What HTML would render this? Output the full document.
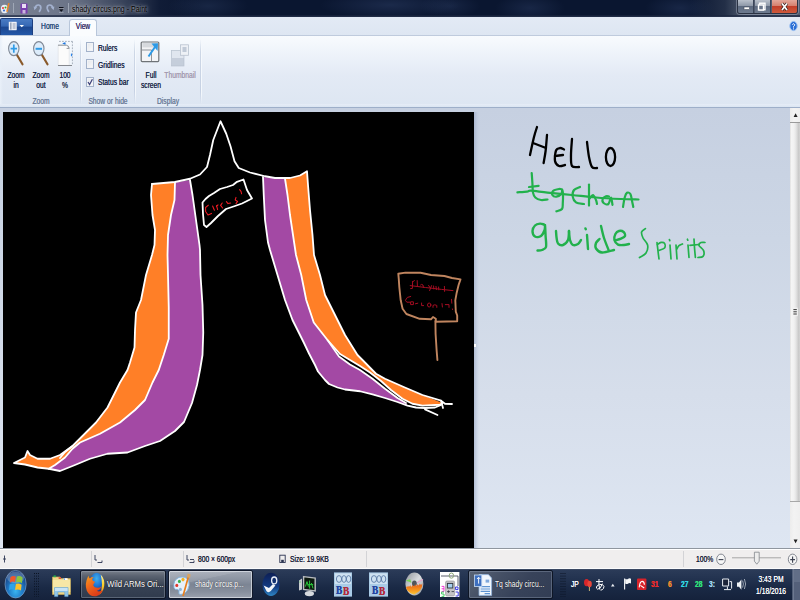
<!DOCTYPE html>
<html><head><meta charset="utf-8">
<style>
*{margin:0;padding:0;box-sizing:border-box}
html,body{width:800px;height:600px;overflow:hidden;background:#c9d3e2;font-family:"Liberation Sans",sans-serif;}
#root{position:relative;width:800px;height:600px;overflow:hidden;background:#c9d3e2}
.abs{position:absolute}
.tx{position:absolute;transform-origin:0 0;transform:scale(.56,.78125);font-size:12px;line-height:15px;white-space:nowrap;color:#1e2a4a;text-shadow:0 0 .7px currentColor}
.cw{position:absolute;width:0;height:0}
.cw>span{position:absolute;left:-100px;width:200px;text-align:center;transform-origin:50% 0;transform:scale(.56,.78125);font-size:12px;line-height:15px;white-space:nowrap;color:#1e2a4a;display:block;text-shadow:0 0 .7px currentColor}
.gl>span{color:#6f7f9a}
.sep{position:absolute;width:1px;background:linear-gradient(180deg,rgba(200,211,228,0) 0%,#cdd7e6 20%,#c6d1e3 80%,rgba(200,211,228,0) 100%)}
.sep:after{content:'';position:absolute;left:1px;top:0;width:1px;height:100%;background:linear-gradient(180deg,rgba(248,251,254,0) 0%,#f6f9fd 15%,#f3f7fc 85%,rgba(248,251,254,0) 100%)}
.cb{position:absolute;width:8.4px;height:10px;background:linear-gradient(135deg,#e4e7ec,#fbfbfc);border:1px solid #a3b2ca;box-shadow:inset 0 0 0 1px #f1f3f6}
</style></head><body><div id="root">
<!-- title bar -->
<div class="abs" id="title" style="left:0;top:0;width:800px;height:17px;background:#0a1630"></div>
<div class="abs" style="left:0;top:0;width:800px;height:17px;background:
 radial-gradient(ellipse 40px 14px at 208px 6px,rgba(60,80,120,.28),rgba(60,80,120,0)),
 radial-gradient(ellipse 70px 14px at 390px 5px,rgba(60,80,125,.34),rgba(60,80,120,0)),
 radial-gradient(ellipse 30px 12px at 450px 6px,rgba(60,80,125,.25),rgba(60,80,120,0)),
 radial-gradient(ellipse 35px 14px at 530px 8px,rgba(60,80,125,.28),rgba(60,80,120,0)),
 radial-gradient(ellipse 35px 14px at 680px 8px,rgba(60,80,125,.28),rgba(60,80,120,0)),
 linear-gradient(90deg,rgba(130,138,155,.95) 0px,rgba(118,126,145,.9) 70px,rgba(80,90,112,.7) 120px,rgba(30,42,70,.3) 160px,rgba(10,22,48,0) 200px,rgba(10,22,48,0) 690px,rgba(60,72,95,.5) 725px,rgba(100,110,128,.8) 745px,rgba(100,110,128,.8) 800px)"></div>
<div class="abs" style="left:0;top:15px;width:800px;height:2px;background:linear-gradient(180deg,rgba(20,30,55,.6),rgba(40,52,78,.9))"></div>
<!-- title icons -->
<svg class="abs" style="left:0;top:0" width="160" height="17" viewBox="0 0 160 17">
 <ellipse cx="4.5" cy="9" rx="3.6" ry="4.2" fill="#e9eef6"/><circle cx="3" cy="8" r="1" fill="#e33"/><circle cx="5.5" cy="7.5" r="1" fill="#3a3"/><circle cx="4" cy="10.5" r="1" fill="#36c"/><rect x="7" y="3" width="1.6" height="9" fill="#e8862a" transform="rotate(12 8 8)"/>
 <rect x="13" y="3" width="1" height="10" fill="#a9b0bf" opacity=".8"/>
 <rect x="20.5" y="3.5" width="7" height="10" rx=".6" fill="#7a3fae"/><rect x="22" y="4" width="4" height="4" fill="#e9def4"/><rect x="22.5" y="10" width="3" height="3.5" fill="#c9b6dd"/>
 <path d="M35.2,8.4 q.4,-3.6 3.4,-3.4 q2.6,.4 2.2,3.4 q-.4,2 -1.8,3.4" stroke="#a3b1cf" stroke-width="1.7" fill="none"/><path d="M33.6,6.6 l3.4,.6 l-2.6,3 Z" fill="#a3b1cf"/>
 <path d="M52.8,8.4 q-.4,-3.6 -3.4,-3.4 q-2.6,.4 -2.2,3.4 q.4,2 1.8,3.4" stroke="#a3b1cf" stroke-width="1.7" fill="none"/><path d="M54.4,6.6 l-3.4,.6 l2.6,3 Z" fill="#a3b1cf"/>
 <rect x="59" y="7" width="4.5" height="1.2" fill="#10131c"/><path d="M59,9.3 L63.5,9.3 61.25,12 Z" fill="#10131c"/><path d="M58.6,8.6 h5.4 M59,12.4 h4.6" stroke="#e8ebf0" stroke-width=".5" opacity=".7"/>
 <rect x="68" y="3" width="1" height="10" fill="#a9b0bf" opacity=".8"/>
</svg>
<div class="tx" style="left:72px;top:2.5px;color:#000;text-shadow:0 0 4px rgba(255,255,255,.75),0 0 9px rgba(255,255,255,.55);font-size:12px;transform:scale(.586,.78125)">shady circus.png - Paint</div>
<!-- window controls -->
<div class="abs" style="left:737px;top:0;width:61px;height:14px;border:1px solid #2b3344;border-top:0;border-radius:0 0 3px 3px;overflow:hidden;box-shadow:0 0 0 1px rgba(200,210,225,.35)">
 <div class="abs" style="left:0;top:0;width:16px;height:13px;background:linear-gradient(180deg,#b9c0cb 0%,#8e98a8 45%,#5d6a80 50%,#6e7b90 100%);border-right:1px solid #3a4458"></div>
 <div class="abs" style="left:17px;top:0;width:16px;height:13px;background:linear-gradient(180deg,#b9c0cb 0%,#8e98a8 45%,#5d6a80 50%,#6e7b90 100%);border-right:1px solid #3a4458"></div>
 <div class="abs" style="left:34px;top:0;width:27px;height:13px;background:linear-gradient(180deg,#e3a79a 0%,#d6806e 45%,#c23f2a 50%,#cf5a3c 100%)"></div>
</div>
<svg class="abs" style="left:737px;top:0" width="63" height="15" viewBox="0 0 63 15">
 <rect x="7" y="7" width="5.5" height="2.6" fill="#fff" stroke="#444c5c" stroke-width=".6"/>
 <rect x="22.5" y="3.2" width="5.5" height="6.5" fill="none" stroke="#fff" stroke-width="1.4"/><rect x="21.5" y="5" width="5" height="5" fill="#6b778c" stroke="#fff" stroke-width="1.4"/>
 <path d="M45,3.5 L50,10 M50,3.5 L45,10" stroke="#3c2320" stroke-width="3" /><path d="M45,3.5 L50,10 M50,3.5 L45,10" stroke="#fff" stroke-width="1.7"/>
</svg>
<!-- tab row -->
<div class="abs" id="tabs" style="left:0;top:17px;width:800px;height:19px;background:linear-gradient(180deg,#e3eaf5,#dde6f2)"></div>
<div class="abs" style="left:0;top:35px;width:800px;height:1px;background:#bfcbdd"></div>
<div class="abs" style="left:0;top:18px;width:33px;height:17px;border-radius:2px 2px 0 0;background:linear-gradient(180deg,#4a7cc4 0%,#3567b3 45%,#1c4790 50%,#2458a8 100%);border:1px solid #1d3f80;border-bottom:0"></div>
<svg class="abs" style="left:0;top:17px" width="34" height="19" viewBox="0 0 34 19">
 <rect x="9" y="5" width="7.5" height="8" fill="#f4f6fa" stroke="#dfe6f2" stroke-width=".5"/><rect x="10" y="5.5" width="1.6" height="7" fill="#9aa7bd"/><path d="M12.6,7 h3 M12.6,9 h3 M12.6,11 h3" stroke="#6d7f9e" stroke-width=".8"/>
 <path d="M19.5,8 L24,8 21.75,10.2 Z" fill="#fff"/>
</svg>
<div class="abs" style="left:69px;top:19px;width:28px;height:18px;background:#fafcfe;border:1px solid #b8c6da;border-bottom:0;border-radius:3px 3px 0 0"></div>
<div class="cw" style="left:49.5px;top:20.3px"><span style="color:#2a4a78">Home</span></div>
<div class="cw" style="left:83px;top:20.3px"><span style="color:#3a2f68">View</span></div>
<!-- help -->
<svg class="abs" style="left:786px;top:19px" width="14" height="14" viewBox="0 0 14 14"><ellipse cx="7.5" cy="7" rx="3.7" ry="4.6" fill="#2b6fd6" stroke="#9cc0f2" stroke-width="1"/><path d="M6.3,5.6 q1.2,-1.8 2.4,0 q0,1.2 -1.2,1.9 l0,1" stroke="#fff" stroke-width="1" fill="none"/><rect x="7" y="9.4" width="1" height="1" fill="#fff"/></svg>
<!-- ribbon -->
<div class="abs" id="ribbon" style="left:0;top:36px;width:800px;height:71px;background:linear-gradient(180deg,#f8fbfe 0%,#eef3fa 25%,#e3eaf5 55%,#dde6f2 100%)"></div>
<div class="abs" style="left:0;top:104px;width:800px;height:3px;background:linear-gradient(180deg,#e6edf7,#dbe5f2)"></div>
<div class="abs" style="left:0;top:107px;width:800px;height:1px;background:#9eafc9"></div>
<div class="abs" style="left:0;top:36px;width:3px;height:68px;background:linear-gradient(90deg,#e9f0f9,rgba(233,240,249,0))"></div>
<div class="sep" style="left:80px;top:39px;height:65px"></div>
<div class="sep" style="left:134px;top:39px;height:65px"></div>
<div class="sep" style="left:200px;top:39px;height:65px"></div>
<!-- ribbon icons -->
<svg class="abs" style="left:0;top:36px" width="210" height="36" viewBox="0 36 210 36">
 <g>
  <path d="M17,55 L22.5,64.3" stroke="#8a5a2b" stroke-width="2.2" stroke-linecap="round"/>
  <ellipse cx="13.8" cy="48.6" rx="5.2" ry="7" fill="#dcecfb" stroke="#7f8794" stroke-width="1.1"/>
  <path d="M10.6,48.6 h6.4 M13.8,44.4 v8.4" stroke="#2f9be6" stroke-width="1.7"/>
  <path d="M42,55 L47.5,64.3" stroke="#8a5a2b" stroke-width="2.2" stroke-linecap="round"/>
  <ellipse cx="38.8" cy="48.6" rx="5.2" ry="7" fill="#dcecfb" stroke="#7f8794" stroke-width="1.1"/>
  <path d="M35.6,48.8 h6.4" stroke="#2f9be6" stroke-width="2"/>
 </g>
 <g>
  <rect x="58" y="40.6" width="14.6" height="25" fill="#f4f8fd" opacity=".6"/>
  <path d="M58.2,45.2 L58.2,65.4 L69.2,65.4 L69.2,48.4 L66.4,45.2 Z" fill="#fbfbfb" stroke="#d6d9de" stroke-width=".5"/>
  <path d="M58,65.5 h14" stroke="#85888e" stroke-width="1"/>
  <path d="M58,45.2 h8.4 q2.6,.4 2.800000000000008,3.2 h-2.6" fill="none" stroke="#86898f" stroke-width=".9"/>
  <path d="M59,41.4 h13.4 M72.4,41.4 v24" stroke="#8a93a3" stroke-width=".7" stroke-dasharray="1.8 1.2"/>
  <path d="M62.2,43.4 l2.6,-1.2 v2.4 Z M64.6,42.4 h1 v2 h-1 Z" fill="#1f78e0"/><rect x="70.9" y="53.6" width="1.2" height="2.6" fill="#2b84ea"/>
 </g>
 <g>
  <rect x="141.2" y="42" width="17.6" height="19.6" rx="1" fill="#f3f4f6" stroke="#6f7377" stroke-width="1.2"/>
  <rect x="142.4" y="43" width="15.2" height="4.4" fill="#d6d9dd"/>
  <path d="M142,50 h9.5 v11" fill="none" stroke="#85898f" stroke-width=".9"/>
  <path d="M148.5,56.5 L156,45.5" stroke="#2d9ae6" stroke-width="2"/><path d="M151.5,43.5 L158,43.2 L157.6,51 Z" fill="#2d9ae6"/>
 </g>
 <g opacity=".9">
  <rect x="171.5" y="50.5" width="12.5" height="15.5" fill="#c2cbd8" stroke="#b0bac9" stroke-width=".6"/>
  <rect x="172" y="51" width="11.5" height="7" fill="#dfe5ee"/>
  <rect x="180.5" y="44.8" width="8" height="10.5" fill="#eef1f6" stroke="#b4bdcb" stroke-width=".8"/>
  <rect x="182.5" y="47" width="4" height="5" fill="#bcc6d4"/>
 </g>
</svg>
<!-- ribbon labels -->
<div class="cw" style="left:15.5px;top:68.6px"><span>Zoom</span></div>
<div class="cw" style="left:15.5px;top:79px"><span>in</span></div>
<div class="cw" style="left:40.5px;top:68.6px"><span>Zoom</span></div>
<div class="cw" style="left:40.5px;top:79px"><span>out</span></div>
<div class="cw" style="left:65px;top:68.6px"><span>100</span></div>
<div class="cw" style="left:65px;top:79px"><span>%</span></div>
<div class="cw gl" style="left:40.5px;top:94.8px"><span>Zoom</span></div>
<div class="cb" style="left:85.8px;top:42.4px"></div>
<div class="cb" style="left:85.8px;top:59.4px"></div>
<div class="cb" style="left:85.8px;top:77px"></div>
<svg class="abs" style="left:86px;top:77px" width="9" height="10" viewBox="0 0 9 10"><path d="M2,5 L3.6,7.6 L6.4,2.2" stroke="#3b3f78" stroke-width="1.2" fill="none"/></svg>
<div class="tx" style="left:97.5px;top:42.2px">Rulers</div>
<div class="tx" style="left:97.5px;top:58.8px">Gridlines</div>
<div class="tx" style="left:97.5px;top:76.2px">Status bar</div>
<div class="cw gl" style="left:108px;top:94.8px"><span>Show or hide</span></div>
<div class="cw" style="left:150.5px;top:68.6px"><span>Full</span></div>
<div class="cw" style="left:150.5px;top:79px"><span>screen</span></div>
<div class="cw" style="left:180px;top:68.6px"><span style="color:#a59bb0">Thumbnail</span></div>
<div class="cw gl" style="left:168px;top:94.8px"><span>Display</span></div>
<!-- workspace -->
<div class="abs" id="work" style="left:0;top:108px;width:790px;height:440px;background:linear-gradient(180deg,#c6d0e1 0%,#ccd6e5 30%,#d6deeb 65%,#dee6f2 100%)"></div>
<div class="abs" style="left:474px;top:112px;width:5px;height:436px;background:linear-gradient(90deg,rgba(150,165,195,.55),rgba(170,184,210,.25) 60%,rgba(170,184,210,0))"></div>
<div class="abs" id="canvas" style="left:3px;top:112px;width:471px;height:436px;background:#000"></div>
<div class="abs" style="left:474px;top:344px;width:2px;height:3px;background:#fff"></div>
<!-- v scrollbar -->
<div class="abs" style="left:790px;top:108px;width:10px;height:440px;background:linear-gradient(90deg,#ececec,#f3f3f3 40%,#efefef)"></div>
<div class="abs" style="left:790px;top:122px;width:10px;height:380px;border-top:1px solid #9a9a9a;border-bottom:1px solid #a8a8a8;background:linear-gradient(90deg,#dcdcdc 0%,#f5f5f5 12%,#f1f1f1 40%,#e4e4e4 60%,#cdcdcd 82%,#c6c6c6 90%,#d9d9d9 100%)"></div>
<svg class="abs" style="left:790px;top:108px" width="10" height="440" viewBox="0 0 10 440">
 <path d="M3.6,9 L5.6,5.2 L7.6,9 Z" fill="#222"/>
 <path d="M3.6,431.5 L7.6,431.5 L5.6,435.3 Z" fill="#222"/>
 <rect x="2.6" y="199.6" width="5.4" height="8.6" rx="1" fill="#f3f3f3" opacity=".8"/>
 <path d="M3.4,201.6 h3.4 M3.4,203.8 h3.4 M3.4,206 h3.4" stroke="#3a3a3a" stroke-width="1"/>
</svg>
<svg class="abs" id="draw" style="left:0;top:0" width="800" height="600" viewBox="0 0 800 600">
<g fill="none" stroke-linejoin="round" stroke-linecap="round">
<path fill="#ff7f27" d="M152,184 L151,195 L152.5,215 L155,230 L154.5,245 L152,255 L146,275 L141,300 L136,312.5 L135,330 L134.5,347.5 L130,362.5 L127.5,370 L120,382.5 L117.5,387.5 L107.5,407.5 L96,422.5 L82.5,436 L72.5,446 L60,455 L50,458.75 L37.5,458.75 L30,455 L27.5,451 L25,457.5 L14,463 L25,464.5 L37.5,467.5 L48.75,468.75 L55,465 L65,457.5 L72.5,448.75 L80,442.5 L100,433.75 L120,422.5 L135,410 L145,400 L152.5,382.5 L158.75,370 L163.75,355 L168.75,338.75 L168.75,307.5 L168,275 L167.5,255 L168,235 L171,215 L174.5,200 L175,182.5 Z"/>
<path fill="#a349a4" d="M175,182.5 L174.5,200 L171,215 L168,235 L167.5,255 L168,275 L168.75,307.5 L168.75,338.75 L163.75,355 L158.75,370 L152.5,382.5 L145,400 L135,410 L120,422.5 L100,433.75 L80,442.5 L72.5,448.75 L65,457.5 L55,465 L48.75,468.75 L60,471 L75,465 L90,458.75 L107.5,453.75 L127.5,452.5 L145,446 L160,441 L175,431 L184,422 L192,403 L197,385 L200,370 L202.5,355 L203.25,332.5 L202.5,305 L200.5,275 L200,250 L199.5,245 L196,220 L192.5,195 L190,180 Z"/>
<path fill="#a349a4" d="M263,177 L263.75,195 L265,220 L268,242.5 L270,250 L277.5,275 L285,300 L292.5,320 L303.75,342.5 L309,353.5 L315,365 L318,371.5 L325,380 L329,384 L337.5,387.5 L345,389.5 L360,391.25 L372.5,394.4 L385,398 L397.5,402 L407.5,405.6 L406,403 L397.5,398 L385,388.75 L372.5,378.75 L360,370 L350,364.5 L339,356.5 L327.5,340 L313.75,322.5 L306.25,300 L301.25,275 L296,255 L293.75,240 L290,215 L287.5,195 L285,178.75 Z"/>
<path fill="#ff7f27" d="M285,178.75 L287.5,195 L290,215 L293.75,240 L296,255 L301.25,275 L306.25,300 L313.75,322.5 L327.5,340 L340,354 L350,360 L360,366 L370,372.5 L381,381 L391,390 L402.5,398.75 L412.5,403.75 L422.5,405.6 L440,404.75 L442.5,403 L422.5,395 L403.75,387 L385,378.75 L376,373.75 L362.5,360 L357.5,355 L345,335 L335,315 L325,295 L320,275 L314,255 L312.5,235 L310,210 L308,185 L307,171.25 L300,175.5 L290,178 Z"/>
<g stroke="#fff" stroke-width="1.8">
<path d="M152,184 L175,182 L190,178.75 L200,174.5 L207,167 L210,155 L213.25,140 L220.5,121.25 L226.25,133.75 L230.5,146.25 L234.5,161.25 L238.75,168 L250,172.5 L265,176.25 L275,178 L290,178 L300,175.5 L307,171.25 L308,185 L310,210 L312.5,235 L314,255 L320,275 L325,295 L335,315 L345,335 L357.5,355 L362.5,360 L376,373.75 L385,378.75 L403.75,387 L422.5,395 L441,400.6 L445,403.75 L452,404"/>
<path d="M152,184 L151,195 L152.5,215 L155,230 L154.5,245 L152,255 L146,275 L141,300 L136,312.5 L135,330 L134.5,347.5 L130,362.5 L127.5,370 L120,382.5 L117.5,387.5 L107.5,407.5 L96,422.5 L82.5,436 L72.5,446 L60,455 L50,458.75 L37.5,458.75 L30,455 L27.5,451 L25,457.5 L14,463 L25,464.5 L37.5,467.5 L48.75,468.75 L60,471 L75,465 L90,458.75 L107.5,453.75 L127.5,452.5 L145,446 L160,441 L175,431 L184,422 L192,403 L197,385 L200,370 L202.5,355 L203.25,332.5 L202.5,305 L200.5,275 L200,250 L199.5,245 L196,220 L192.5,195 L190,180"/>
<path d="M175,182.5 L174.5,200 L171,215 L168,235 L167.5,255 L168,275 L168.75,307.5 L168.75,338.75 L163.75,355 L158.75,370 L152.5,382.5 L145,400 L135,410 L120,422.5 L100,433.75 L80,442.5 L72.5,448.75 L65,457.5 L55,465 L48.75,468.75"/>
<path d="M72.5,446 L65,452 L60,458"/>
<path d="M263,177 L263.75,195 L265,220 L268,242.5 L270,250 L277.5,275 L285,300 L292.5,320 L303.75,342.5 L309,353.5 L315,365 L318,371.5 L325,380 L329,384 L337.5,387.5 L345,389.5 L360,391.25 L372.5,394.4 L385,398 L397.5,402 L407.5,405.6 L416,407.5 L425,408 L435,407.5 L441,405"/>
<path d="M425,409.4 L437.5,415"/>
<path d="M285,178.75 L287.5,195 L290,215 L293.75,240 L296,255 L301.25,275 L306.25,300 L313.75,322.5 L327.5,340 L340,354 L350,360 L360,366 L370,372.5 L381,381 L391,390 L402.5,398.75 L412.5,403.75 L422.5,405.6 L440,404.75 L442.5,403"/>
<path d="M327.5,340 L339,356.5 L350,364.5 L360,370 L372.5,378.75 L385,388.75 L397.5,398 L406,403"/>
<path d="M441,400.6 L443,408"/>
<path d="M202.5,202.5 L205.5,199 L209,196 L214,193 L220,189 L227,187 L233,185 L237,181.8 L243.5,179.5 L247,190 L252,198.5 L242,203.5 L235,206 L226,209 L218,216 L211,223 L206.5,227 L204,225 L203,214 Z"/>
</g>
<!-- circus text -->
<g stroke="#f01c24" stroke-width="1.05">
<path d="M208.4,205.2 L205.6,207.5 205.6,211.5 208,215 211.5,213.4"/>
<path d="M212.6,206 L214.4,210.2"/>
<path d="M216.6,205.6 L217.6,209.6 M216.4,206.6 L218,204.8"/>
<path d="M222.2,203 L220.6,205.4 222.6,208"/>
<path d="M226.4,201.6 L228,203.6 230.6,203"/>
<path d="M236,197.4 L235.2,200 237.6,201.4 236,203.6"/>
<path d="M239.6,189.6 L241,191.4 241.6,193.8"/>
</g>
<!-- brown sign -->
<g stroke="#c0855f" stroke-width="1.9">
<path d="M398.3,273.7 L405.4,272.6 420.6,272.7 431,275 444.4,276 452,278 460.5,279.4 458.6,285 456.7,292.7 455.3,300.3 455.8,311.7 457.2,315.5 457.2,321.2 435.8,321.7 435.8,318.8 433,317 431,319.3 419.7,318.8 406.4,314 402.6,308.8 400.7,300.3 399.3,287 398.8,279.4 Z"/>
<path d="M435.4,321 L435.6,334 436.6,350 437.4,360"/>
</g>
<g stroke="#a40d22" stroke-width="1">
<path d="M410.2,285.6 L425.4,287.5 441.5,289.4 453,290.6"/>
<path d="M412.6,281.4 L412.4,288.4 410.6,288.6 M413,281.6 L414.4,280.6 M417.2,280.6 L417.4,286 M420.6,285 L421.6,284.4 423,285 423.4,287.4 M428.6,285.4 L430.6,288.6 M431.6,285.6 L429.6,290.6 M433.6,286 L433.8,289 M436,286.4 L436.4,289.6 M438.6,287 L438.8,289.8 M444.4,286.4 L444.6,291.4"/>
<path d="M410.7,296.5 L407.4,297.4 405.4,300.3 406.8,302.2 409.7,302.2"/>
<path d="M411,301.8 L413.4,301.8 413.4,304.6 411,304.6 Z"/>
<path d="M415.4,303.8 L417.8,303.2"/>
<path d="M421.6,303 L421.6,305.6 423.6,305.6"/>
<ellipse cx="429.2" cy="305" rx="1.7" ry="2" fill="none"/>
<path d="M433,307.4 L433,305.4 434.8,304.8 436.8,305.4 436.8,307.4"/>
<path d="M442,303.6 L442.4,307"/>
<path d="M445.3,304.6 L449,304.6 449,307.4"/>
<path d="M451.5,299.3 L451.8,303.2 M452.4,308.9 L452.5,309.6"/>
</g>

<g stroke="#000" stroke-width="2.3"><path d="M537,127 C536.50,128.67 535.17,132.33 534,137 C532.83,141.67 530.67,152.00 530,155"/><path d="M533,143 L546,148"/><path d="M547,135 C546.77,137.67 546.17,146.33 545.6,151 C545.03,155.67 543.93,161.00 543.6,163"/><path d="M564,149.5 C563.33,149.25 561.33,147.83 560,148 C558.67,148.17 556.83,148.33 556,150.5 C555.17,152.67 554.50,158.42 555,161 C555.50,163.58 557.33,165.33 559,166 C560.67,166.67 564.00,165.17 565,165"/><path d="M555,156 L563,155"/><path d="M572,139 C571.83,141.67 571.00,150.50 571,155 C571.00,159.50 570.67,164.00 572,166 C573.33,168.00 577.83,166.83 579,167"/><path d="M587,142 C587.33,144.50 588.17,152.83 589,157 C589.83,161.17 590.67,165.17 592,167 C593.33,168.83 596.17,167.83 597,168"/></g>
<ellipse cx="610.5" cy="157" rx="4.6" ry="9" stroke="#000" stroke-width="2.3"/>
<g stroke="#22b14c" stroke-width="2.2"><path d="M517.4,192.3 C519.00,192.18 524.73,191.87 527,191.6 C529.27,191.33 527.58,190.53 531,190.7 C534.42,190.87 540.67,191.88 547.5,192.6 C554.33,193.32 563.92,194.18 572,195 C580.08,195.82 587.90,196.83 596,197.5 C604.10,198.17 613.52,198.67 620.6,199 C627.68,199.33 635.52,199.42 638.5,199.5"/><path d="M531.7,173 C531.82,174.67 532.18,179.73 532.4,183 C532.62,186.27 532.52,190.18 533,192.6 C533.48,195.02 533.97,196.27 535.3,197.5 C536.63,198.73 538.97,199.67 541,200 C543.03,200.33 546.42,199.58 547.5,199.5"/><path d="M529,187 L538.6,185.8"/><path d="M562,189.4 C561.50,189.33 560.50,188.73 559,189 C557.50,189.27 554.10,190.00 553,191 C551.90,192.00 551.83,194.05 552.4,195 C552.97,195.95 554.92,196.87 556.4,196.7 C557.88,196.53 560.32,195.12 561.3,194 C562.28,192.88 562.02,189.83 562.3,190 C562.58,190.17 562.92,192.83 563,195 C563.08,197.17 562.97,200.67 562.8,203 C562.63,205.33 563.07,207.62 562,209 C560.93,210.38 557.33,210.92 556.4,211.3"/><path d="M580,187 C579.00,187.50 575.22,188.38 574,190 C572.78,191.62 572.37,194.63 572.7,196.7 C573.03,198.77 574.12,201.18 576,202.4 C577.88,203.62 582.67,203.73 584,204"/><path d="M589,184.5 L589,205.6"/><path d="M589.6,198.5 C590.17,197.92 591.93,194.75 593,195 C594.07,195.25 595.33,198.50 596,200 C596.67,201.50 596.83,203.33 597,204"/><path d="M609,196.5 C608.50,196.47 607.05,195.88 606,196.3 C604.95,196.72 603.10,197.88 602.7,199 C602.30,200.12 602.65,202.17 603.6,203 C604.55,203.83 607.17,204.92 608.4,204 C609.63,203.08 610.32,197.37 611,197.5 C611.68,197.63 612.25,203.58 612.5,204.8"/><path d="M623,207 C623.28,205.42 624.03,199.87 624.7,197.5 C625.37,195.13 626.05,193.38 627,192.8 C627.95,192.22 629.57,192.68 630.4,194 C631.23,195.32 631.52,198.53 632,200.7 C632.48,202.87 633.08,205.95 633.3,207"/></g>
<g stroke="#22b14c" stroke-width="2.4"><path d="M544,224.5 C543.33,224.35 541.50,223.43 540,223.6 C538.50,223.77 536.25,224.27 535,225.5 C533.75,226.73 532.50,229.17 532.5,231 C532.50,232.83 533.58,235.67 535,236.5 C536.42,237.33 539.40,237.08 541,236 C542.60,234.92 543.93,231.83 544.6,230 C545.27,228.17 544.83,224.00 545,225 C545.17,226.00 545.43,232.33 545.6,236 C545.77,239.67 546.60,244.67 546,247 C545.40,249.33 543.42,249.42 542,250 C540.58,250.58 538.25,250.42 537.5,250.5"/><path d="M556,231 C556.10,232.17 556.27,235.92 556.6,238 C556.93,240.08 556.93,242.33 558,243.5 C559.07,244.67 561.33,245.58 563,245 C564.67,244.42 567.00,242.33 568,240 C569.00,237.67 568.83,232.50 569,231"/><path d="M569,231 C569.17,232.50 569.33,237.67 570,240 C570.67,242.33 571.67,244.33 573,245 C574.33,245.67 576.67,244.83 578,244 C579.33,243.17 580.50,240.67 581,240"/><path d="M587,235 L588,249"/><path d="M585.4,228.4 L585.8,229.2"/><path d="M601,226 C601.50,228.00 602.67,233.83 604,238 C605.33,242.17 608.17,248.83 609,251"/><path d="M599.5,239 C598.92,239.67 596.58,241.42 596,243 C595.42,244.58 595.00,246.92 596,248.5 C597.00,250.08 599.00,252.25 602,252.5 C605.00,252.75 612.00,250.42 614,250"/><path d="M615,240.5 C616.00,240.18 619.33,239.35 621,238.6 C622.67,237.85 624.57,237.10 625,236 C625.43,234.90 624.60,232.83 623.6,232 C622.60,231.17 620.37,230.67 619,231 C617.63,231.33 616.17,232.50 615.4,234 C614.63,235.50 613.97,238.23 614.4,240 C614.83,241.77 616.40,243.77 618,244.6 C619.60,245.43 622.17,245.10 624,245 C625.83,244.90 628.17,244.17 629,244"/></g>
<g stroke="#22b14c" stroke-width="1.7"><path d="M645.4,228.6 C644.77,229.17 642.00,230.43 641.6,232 C641.20,233.57 642.00,235.83 643,238 C644.00,240.17 647.10,242.50 647.6,245 C648.10,247.50 647.35,250.92 646,253 C644.65,255.08 640.58,256.75 639.5,257.5"/><path d="M657,242.5 C657.17,243.92 657.67,248.25 658,251 C658.33,253.75 658.83,257.67 659,259"/><path d="M657.4,244.6 C658.00,244.23 659.80,242.60 661,242.4 C662.20,242.20 664.00,242.47 664.6,243.4 C665.20,244.33 665.53,246.83 664.6,248 C663.67,249.17 659.93,250.00 659,250.4"/><path d="M670,245 L671,259"/><path d="M669.4,239.6 L669.8,240.6"/><path d="M676,245 L677,259"/><path d="M676.8,249 C677.17,248.43 678.05,246.43 679,245.6 C679.95,244.77 681.92,244.27 682.5,244"/><path d="M688,245 L689,257.5"/><path d="M687.4,239.2 L687.8,240.2"/><path d="M694,239 C694.10,240.67 694.37,245.92 694.6,249 C694.83,252.08 695.27,256.08 695.4,257.5"/><path d="M690,245.4 L699,244.5"/><path d="M705,242.5 C704.33,242.52 702.00,242.12 701,242.6 C700.00,243.08 698.57,244.07 699,245.4 C699.43,246.73 702.93,248.77 703.6,250.6 C704.27,252.43 703.93,255.25 703,256.4 C702.07,257.55 698.83,257.32 698,257.5"/></g>
</g></svg><!-- status bar -->
<div class="abs" id="status" style="left:0;top:548px;width:800px;height:21px;background:#f0eeee;border-top:1px solid #8f969f"></div>
<div class="abs" style="left:0;top:549px;width:800px;height:1px;background:#fff"></div>
<div class="abs" style="left:0;top:568px;width:800px;height:1px;background:#fbfbfc"></div>
<div class="abs" style="left:91px;top:551px;width:1px;height:16px;background:#d3d3d6"></div>
<div class="abs" style="left:183px;top:551px;width:1px;height:16px;background:#d3d3d6"></div>
<div class="abs" style="left:366px;top:551px;width:1px;height:16px;background:#d3d3d6"></div>
<div class="abs" style="left:683px;top:551px;width:1px;height:16px;background:#d3d3d6"></div>
<svg class="abs" style="left:0;top:549px" width="800" height="20" viewBox="0 549 800 20">
 <path d="M3,559 h3 M4.5,555.5 v7" stroke="#2b3350" stroke-width=".9"/>
 <path d="M95,555 v5 h2 M97.5,562.5 h4.5 v-2" stroke="#2b3350" stroke-width=".9" fill="none"/>
 <path d="M187,555 v5 h2 M189.5,562.5 h4.5 v-2 M190,559.5 h4" stroke="#2b3350" stroke-width=".9" fill="none"/>
 <rect x="279.8" y="555.2" width="5.4" height="7.3" fill="none" stroke="#2b3350" stroke-width=".9"/><rect x="281.2" y="559.8" width="2.6" height="2.4" fill="#2b3350"/>
 <ellipse cx="721" cy="559.3" rx="4.3" ry="5.2" fill="#f6f6f6" stroke="#767b84" stroke-width=".9"/><path d="M718.6,559.6 h4.8" stroke="#3b4050" stroke-width="1.1"/>
 <ellipse cx="792.6" cy="559.3" rx="4.3" ry="5.2" fill="#f6f6f6" stroke="#767b84" stroke-width=".9"/><path d="M790.2,559.6 h4.8 M792.6,556.4 v6.4" stroke="#3b4050" stroke-width="1.1"/>
 <path d="M732,557.8 h49" stroke="#a6a6a6" stroke-width="1"/>
 <path d="M754.4,552.2 h4.8 v9 l-2.4,3 l-2.4,-3 Z" fill="#ededed" stroke="#82868c" stroke-width=".8"/>
</svg>
<div class="tx" style="left:197.5px;top:552.6px;color:#20243a">800 × 600px</div>
<div class="tx" style="left:289.5px;top:552.6px;color:#20243a">Size: 19.9KB</div>
<div class="tx" style="left:695.5px;top:552.6px;color:#20243a">100%</div>
<!-- taskbar -->
<div class="abs" id="taskbar" style="left:0;top:569px;width:800px;height:31px;background:linear-gradient(180deg,#2c3c59 0%,#233350 30%,#1a2945 60%,#15223b 100%)"></div>
<div class="abs" style="left:0;top:569px;width:800px;height:1px;background:#3b4963"></div>
<!-- start orb -->
<svg class="abs" style="left:0;top:569px" width="80" height="31" viewBox="0 569 80 31">
 <defs><radialGradient id="orb" cx=".5" cy=".75" r=".7"><stop offset="0" stop-color="#39b4f0"/><stop offset=".5" stop-color="#1f78c4"/><stop offset="1" stop-color="#183a78"/></radialGradient></defs>
 <ellipse cx="15.6" cy="584.2" rx="10.6" ry="13.8" fill="url(#orb)" stroke="#8fb4d8" stroke-width=".8" stroke-opacity=".7"/>
 <ellipse cx="15.6" cy="577.5" rx="8.6" ry="6" fill="#fff" opacity=".22"/>
 <path d="M10.4,577.2 q2.6,-2.2 5.4,-.6 l-.7,5.6 q-2.6,-1.4 -5.2,.6 Z" fill="#f2572a"/>
 <path d="M16.8,576.6 q2.8,-1.4 5.8,.8 l-.7,5.8 q-2.8,-2 -5.8,-.6 Z" fill="#8cc63e"/>
 <path d="M9.6,584.6 q2.6,-1.8 5.2,-.6 l-.7,5.8 q-2.6,-1.4 -5.2,.6 Z" fill="#2ea3e8"/>
 <path d="M15.8,584 q2.8,-1.4 5.8,.8 l-.7,5.8 q-2.8,-2 -5.8,-.6 Z" fill="#fcc22a"/>
 <g fill="#0c1424"><rect x="34" y="573" width="1" height="1"/><rect x="36" y="573" width="1" height="1"/><rect x="38" y="573" width="1" height="1"/></g>
 <path d="M34.5,573 v24 M36.5,573 v24 M38.5,573 v24" stroke="#0b1322" stroke-width="1" stroke-dasharray="1 1.6" opacity=".9"/>
 <!-- explorer folder -->
 <path d="M52.5,577 h7.5 l1.4,1.6 h9 v15.8 h-17.9 Z" fill="#f0d98c" stroke="#c9a94e" stroke-width=".7"/>
 <rect x="52.8" y="580" width="17.4" height="12" fill="#f7e7a6"/>
 <rect x="53.6" y="575.4" width="2.2" height="1.8" fill="#21b04a"/><rect x="58.6" y="577.4" width="2.4" height="1.4" fill="#d33"/><rect x="63.6" y="578.2" width="4" height="1.8" fill="#fff"/><rect x="63.8" y="578.4" width="1" height="1.4" fill="#2c7be0"/>
 <path d="M54.5,596.6 v-9 h13.6 v9 h-3.4 v-4.6 h-6.8 v4.6 Z" fill="#8fc6ea" stroke="#5a9fd0" stroke-width=".5"/>
 <rect x="55" y="588" width="12.6" height="3" fill="#c8e4f6"/>
</svg>
<!-- firefox button -->
<div class="abs" style="left:80px;top:570px;width:86px;height:29px;border:1px solid #0e1626;border-radius:2px;background:linear-gradient(180deg,#787f8a 0%,#5b6371 18%,#414b5b 45%,#374254 55%,#303b4d 100%);box-shadow:inset 0 0 0 1px rgba(170,180,196,.35)"></div>
<svg class="abs" style="left:80px;top:569px" width="30" height="31" viewBox="80 569 30 31">
 <defs><radialGradient id="ffb" cx=".5" cy=".3" r=".75"><stop offset="0" stop-color="#3fb0ee"/><stop offset=".55" stop-color="#1c6fd0"/><stop offset="1" stop-color="#102a78"/></radialGradient>
 <linearGradient id="ffo" x1="0" y1="0" x2=".6" y2="1"><stop offset="0" stop-color="#f9a11c"/><stop offset=".45" stop-color="#f06a1c"/><stop offset="1" stop-color="#dc3a18"/></linearGradient>
 <linearGradient id="ffy" x1="0" y1="0" x2="0" y2="1"><stop offset="0" stop-color="#fff0a0"/><stop offset=".5" stop-color="#fbd12a"/><stop offset="1" stop-color="#f08a1c"/></linearGradient></defs>
 <ellipse cx="96.6" cy="582.4" rx="6.6" ry="9.6" fill="url(#ffb)"/>
 <path d="M100.6,574.6 q4.400000000000006,4.4 3.6,11.4 q-1,6 -5,9 q3,-5 2.8,-10.4 q-.2,-6 -1.4,-10 Z" fill="url(#ffy)"/>
 <path d="M88.4,575.6 q.2,2 1.400000000000006,2.800000000000068 q1.6,-1.6 4,-1.4 q-1.8,1.2 -1.6,3 q1.2,1.4 3,1.8 q-1.6,1.6 -2,3.4 q1,2.8 4.6,2.6 q2,-.2 3.6,-1.4 q-1,3.4 -4.600000000000009,4.4 q2.6,1.6 6,-1 q-1.4,5 -6.6,6.4 q-6.4,1 -9.4,-5.4 q-2.6,-6.4 1.6,-15.2 Z" fill="url(#ffo)"/>
</svg>
<div class="tx" style="left:107px;top:578.2px;color:#fff;text-shadow:0 0 2px #000;transform:scale(.645,.78125)">Wild ARMs Ori...</div>
<!-- paint button (active) -->
<div class="abs" style="left:168px;top:570px;width:85px;height:29px;border:1px solid #10182a;border-radius:2px;background:linear-gradient(180deg,#a0a7b3 0%,#8c94a2 30%,#7c8594 50%,#868e9c 75%,#9aa1ae 100%);box-shadow:inset 0 0 0 1px rgba(225,229,236,.7)"></div>
<div class="abs" style="left:170px;top:571px;width:82px;height:14px;background:linear-gradient(168deg,rgba(255,255,255,.16) 0%,rgba(255,255,255,.10) 48%,rgba(255,255,255,0) 50%)"></div>
<svg class="abs" style="left:170px;top:570px" width="24" height="29" viewBox="170 570 24 29">
 <path d="M174,588 q-1.4,-8 5,-10.6 q6.6,-1.6 9.6,3 q1.6,5 -1,9.6 q-2.6,4.6 -7.6,4.4 q-1.8,-.6 -1,-2.4 q.6,-2 -1.4,-2.4 q-2.8,.2 -3.6,-1.6 Z" fill="#e6f0fa" stroke="#7fb2de" stroke-width=".9"/>
 <ellipse cx="176.8" cy="585.4" rx="1.5" ry="1.7" fill="#e23a2e"/><ellipse cx="179.4" cy="581.4" rx="1.5" ry="1.7" fill="#37b24a"/><ellipse cx="183" cy="579.6" rx="1.6" ry="1.8" fill="#f5b320"/><ellipse cx="180.4" cy="589.4" rx="1.5" ry="1.6" fill="#8fb7d8"/>
 <path d="M183,596 L188.4,576.8" stroke="#e77f1e" stroke-width="1.7"/><path d="M187.6,573.4 l3,1.2 l-.6,3.4 l-3,-.8 Z" fill="#d9a463"/>
</svg>
<div class="tx" style="left:194.5px;top:578.2px;color:#fff;text-shadow:0 0 2px rgba(0,0,0,.6)">shady circus.p...</div>
<!-- pinned icons -->
<svg class="abs" style="left:255px;top:569px" width="210" height="31" viewBox="255 569 210 31">
 <defs><linearGradient id="stm" x1="0" y1="0" x2="0" y2="1"><stop offset="0" stop-color="#0d1f55"/><stop offset=".6" stop-color="#123a82"/><stop offset="1" stop-color="#2f86c4"/></linearGradient>
 <linearGradient id="dsc" x1="0" y1="0" x2="1" y2="1"><stop offset="0" stop-color="#8f9499"/><stop offset=".5" stop-color="#d9dcdf"/><stop offset="1" stop-color="#8a8f95"/></linearGradient>
 <linearGradient id="flm" x1="0" y1="0" x2="0" y2="1"><stop offset="0" stop-color="#e2571c"/><stop offset=".6" stop-color="#f6961d"/><stop offset="1" stop-color="#f9c63a"/></linearGradient></defs>
 <!-- steam -->
 <ellipse cx="271" cy="584.4" rx="8.6" ry="11.6" fill="url(#stm)"/>
 <ellipse cx="274.2" cy="580.4" rx="2.6" ry="3.4" fill="none" stroke="#e9eef6" stroke-width="1.3"/>
 <path d="M263.6,585.4 l5.4,2.6 l4,-4 l2.4,1.4 l-4.6,5.6 q-2.2,2.2 -4.2,.2 Z" fill="#f2f5fa"/>
 <!-- monitor -->
 <path d="M303.6,576.6 l11.6,1.4 v13 l-11.6,-1.6 Z" fill="#0d1a10" stroke="#b9bcc0" stroke-width="1.4"/>
 <path d="M299,580.4 l3,-1.8 v11 l-3,1 Z" fill="#c9ccd0"/><rect x="299.6" y="581.4" width=".9" height="1.2" fill="#3fd04a"/>
 <path d="M305.4,586.6 l1.6,-5 l1.4,5 M309.6,580.6 v8 M311.4,583 l1.6,5.4 M308,584.6 h5.2" stroke="#27c83a" stroke-width="1" fill="none"/>
 <ellipse cx="309.4" cy="593.6" rx="4.6" ry="2.6" fill="#d7dade"/>
 <!-- BB icons -->
 <rect x="334" y="572.4" width="18" height="24.2" fill="#a9cbe6"/><rect x="335" y="573.4" width="16" height="10.6" fill="#cfe2f2"/>
 <ellipse cx="339" cy="579" rx="2.6" ry="3.4" fill="none" stroke="#5a7aa6" stroke-width=".9"/><ellipse cx="344" cy="579" rx="2.2" ry="3.4" fill="none" stroke="#5a7aa6" stroke-width=".9"/><ellipse cx="348.6" cy="579" rx="2.2" ry="3.4" fill="none" stroke="#5a7aa6" stroke-width=".9"/>
 <rect x="369" y="572.4" width="19" height="24.2" fill="#a9cbe6"/><rect x="370" y="573.4" width="17" height="10.6" fill="#cfe2f2"/>
 <ellipse cx="374" cy="579" rx="2.6" ry="3.4" fill="none" stroke="#5a7aa6" stroke-width=".9"/><ellipse cx="379" cy="579" rx="2.2" ry="3.4" fill="none" stroke="#5a7aa6" stroke-width=".9"/><ellipse cx="383.6" cy="579" rx="2.2" ry="3.4" fill="none" stroke="#5a7aa6" stroke-width=".9"/>
 <!-- disc -->
 <ellipse cx="414.4" cy="584" rx="9" ry="11.4" fill="url(#dsc)"/>
 <path d="M405.6,580.4 l6,2.4 l-1.4,-3.6 Z" fill="#6fd64a" opacity=".9"/><path d="M423,579.4 l-6,3.4" stroke="#e3a2c8" stroke-width="1.2"/>
 <ellipse cx="414.4" cy="583.6" rx="2.4" ry="3" fill="#50555c"/>
 <path d="M406,586 q1,2.4 2,-.6 q1,3 2.2,-.4 q1,3.6 2.4,-.2 q1.2,3 2.6,-.6 q1.2,3.4 2.4,-.2 q1.2,3 2.2,-.4 q1.2,2.6 2.6,-.4 q.2,7.4 -8.200000000000001,11.4 q-8.4,-2.4 -8.200000000000001,-8.6 Z" fill="url(#flm)"/>
 <!-- gameboy -->
 <rect x="440" y="572" width="19.4" height="25" fill="#fff"/>
 <path d="M441,576 h17 v10" stroke="#33384a" stroke-width=".8" fill="none"/>
 <ellipse cx="451.4" cy="575.6" rx="2.2" ry="2.6" fill="none" stroke="#8fa77a" stroke-width="1"/>
 <rect x="445.6" y="581" width="9" height="15" rx="1.4" fill="#c3c3c6" stroke="#8a8a90" stroke-width=".6"/><rect x="447.4" y="583.4" width="5.4" height="4.6" fill="#a6d0f0" stroke="#30343e" stroke-width=".9"/>
 <path d="M447,591.6 h3 M448.5,590.4 v2.4 M451.6,591.6 h2.4" stroke="#30343e" stroke-width=".8"/>
 <path d="M441.6,586.4 h2.4 v5 h-2.4 M441.6,588.8 h2.4" stroke="#f21fd2" stroke-width=".9" fill="none"/>
 <path d="M444,592 h-2.400000000000034 v2 h2.4 v2.4 h-2.4" stroke="#2fc85a" stroke-width=".9" fill="none"/>
 <path d="M455.6,587 h2.4 v2.6 h-2.4 Z M455.6,592 h2.6 v4 h-2.6" stroke="#2222e0" stroke-width=".9" fill="none"/>
</svg>
<div class="tx" style="left:336.4px;top:583.6px;color:#2343a0;font-family:'Liberation Serif',serif;font-weight:bold;font-size:15px;line-height:15px;transform:scale(.62,.8)">B</div>
<div class="tx" style="left:343.4px;top:584.6px;color:#b22a38;font-family:'Liberation Serif',serif;font-weight:bold;font-size:15px;line-height:15px;transform:scale(.62,.8)">B</div>
<div class="tx" style="left:371.6px;top:583.6px;color:#2343a0;font-family:'Liberation Serif',serif;font-weight:bold;font-size:15px;line-height:15px;transform:scale(.62,.8)">B</div>
<div class="tx" style="left:378.8px;top:584.6px;color:#b22a38;font-family:'Liberation Serif',serif;font-weight:bold;font-size:15px;line-height:15px;transform:scale(.62,.8)">B</div>
<!-- doc button -->
<div class="abs" style="left:468px;top:570px;width:85px;height:29px;border:1px solid #0e1626;border-radius:2px;background:linear-gradient(135deg,#5a6577 0%,#465166 30%,#38435a 60%,#323d54 100%);box-shadow:inset 0 0 0 1px rgba(160,172,192,.35)"></div>
<svg class="abs" style="left:470px;top:570px" width="26" height="29" viewBox="470 570 26 29">
 <path d="M479,574.6 h9.4 l3.2,3.4 v17.4 h-12.6 Z" fill="#f1f6fc" stroke="#8fb3dc" stroke-width=".8"/>
 <path d="M480.6,586.6 h9.4 M480.6,589 h9.4 M480.6,591.4 h9.4 M484.6,593.6 h5.4" stroke="#5f94d2" stroke-width="1.1"/>
 <rect x="474.4" y="575" width="7.4" height="11.6" fill="#3d6fc0" stroke="#c9dcf2" stroke-width=".8"/><path d="M477,579 l1.6,-1.8 l1.6,1.8 M478.6,577.6 v6" stroke="#fff" stroke-width=".9" fill="none"/>
 <rect x="485.6" y="579.6" width="3.6" height="3" fill="#7fa8dc"/>
</svg>
<div class="tx" style="left:495px;top:578.2px;color:#fff;text-shadow:0 0 2px #000">Tq shady circu...</div>
<!-- tray -->
<svg class="abs" style="left:555px;top:569px" width="245" height="31" viewBox="555 569 245 31">
 <path d="M561,573 v24 M563,573 v24 M565,573 v24" stroke="#0b1322" stroke-width="1" stroke-dasharray="1 1.6" opacity=".9"/>
 <ellipse cx="586.6" cy="582.6" rx="2.6" ry="3.6" fill="#d8262a"/><ellipse cx="589.6" cy="584" rx="2.2" ry="3.2" fill="#e8463a"/><path d="M589.4,587 v4" stroke="#d9c07a" stroke-width=".9"/>
 <g stroke="#fff" stroke-width="1" fill="none"><path d="M596,581.6 h7 M599,579 q-.6,6 .8,10.6"/><path d="M602.4,583.6 q-1.6,5.6 -4.8,5.6 q-2,-.8 -.8,-3 q2.4,-2.8 5.6,-1.6 q2.6,1.6 1,4 q-1,1.4 -2.8,1.6"/></g>
 <path d="M611,586.4 l1.8,-2.600000000000023 l1.8,2.6 Z" fill="#e9edf2"/>
 <path d="M624.6,578.6 v11" stroke="#f4f6f8" stroke-width="1.1"/><path d="M625.2,578.8 q1.600000000000023,1 3,0 q1.4,-1 2.8,0 v4.6 q-1.4,-1 -2.8,0 q-1.4,1 -3,0 Z" fill="#f4f6f8"/>
 <rect x="637" y="578.6" width="9.4" height="11.4" rx="1" fill="#d8232a"/><path d="M639.2,587.4 q.6,-6 3,-6 q2,0 2.200000000000046,3.4 M640.4,585.4 l3.8,2.600000000000023" stroke="#fff" stroke-width="1.1" fill="none"/>
 <path d="M722.6,579 h6 v7 h-6 Z" fill="#1b2338" stroke="#e9edf2" stroke-width="1"/><path d="M724,589.6 h7 M727.4,586.6 v3 M729.6,581.6 h2 v7" stroke="#e9edf2" stroke-width="1" fill="none"/>
 <path d="M737,582.4 h2 l2.4,-3 v10.400000000000034 l-2.4,-3 h-2 Z" fill="#eef1f5"/><path d="M742.6,580.6 q1.6,3.4 0,7 M744.4,579 q2.4,5 0,10" stroke="#cfd5de" stroke-width=".7" fill="none"/>
 <rect x="792.6" y="569" width="7.4" height="31" fill="#54607a"/><rect x="792.6" y="569" width="1" height="31" fill="#7f8aa0"/><rect x="793.6" y="570" width="6.4" height="12" fill="#6c7890" opacity=".6"/>
</svg>
<div class="tx" style="left:571px;top:577.6px;color:#fff">JP</div>
<div class="tx" style="left:651.4px;top:577.8px;color:#ef2a2a;font-size:12px;font-weight:bold">31</div>
<div class="tx" style="left:668.4px;top:577.8px;color:#f28a2e;font-size:12px;font-weight:bold">6</div>
<div class="tx" style="left:680.6px;top:577.8px;color:#2fd8e6;font-size:12px;font-weight:bold">27</div>
<div class="tx" style="left:695px;top:577.8px;color:#2fe07a;font-size:12px;font-weight:bold">28</div>
<div class="tx" style="left:709px;top:577.8px;color:#9fd6f2;font-size:12px;font-weight:bold">3:</div>
<div class="cw" style="left:771px;top:572.6px"><span style="color:#fff">3:43 PM</span></div>
<div class="cw" style="left:771px;top:585.2px"><span style="color:#fff">1/18/2016</span></div>

</div></body></html>
